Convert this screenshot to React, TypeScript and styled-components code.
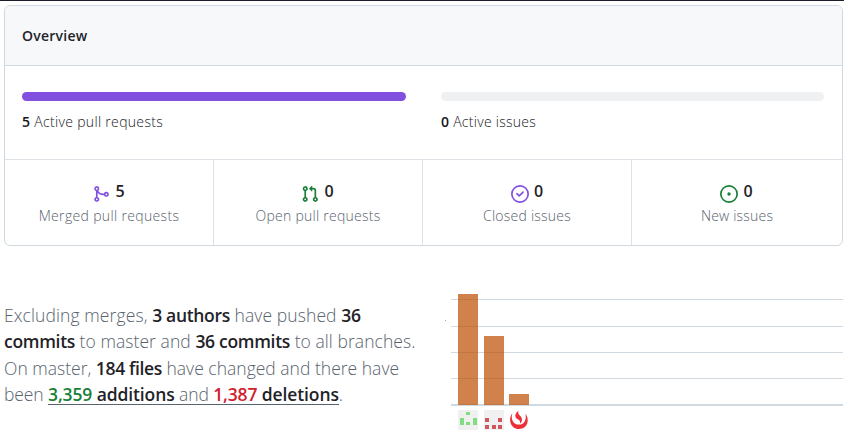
import React from "react";
import styled, { createGlobalStyle } from "styled-components";

const Global = createGlobalStyle`
  * { box-sizing: border-box; }
  body { margin: 0; background: #fff; overflow: hidden; }
`;

const Page = styled.main`
  width: 844px;
  height: 440px;
  border-top: 1px solid #1c1d29;
  padding: 4px 1px 0 4px;
  font-family: "Open Sans", "Noto Sans", sans-serif;
  font-weight: 400;
  color: #1f2328;
`;

const Card = styled.section`
  height: 241px;
  border: 1px solid #d1d9e0;
  border-radius: 6px;
  overflow: hidden;
`;

const CardHeader = styled.header`
  height: 60px;
  padding: 0 17px;
  background: #f6f8fa;
  border-bottom: 1px solid #d1d9e0;
`;

const Title = styled.h3<{ $spacing: number }>`
  margin: 0;
  font-size: 14px;
  line-height: 60px;
  font-weight: 600;
  letter-spacing: ${(p) => p.$spacing}px;
`;

const Meters = styled.div`
  height: 93px;
  padding: 26px 18px 0 17px;
  display: grid;
  grid-template-columns: 384px 383px;
  column-gap: 35px;
`;

const Track = styled.div<{ $color: string }>`
  height: 9px;
  border-radius: 5px;
  background: ${(p) => p.$color};
`;

const MeterLabel = styled.div<{ $spacing: number }>`
  width: max-content;
  margin-top: 11px;
  font-size: 14px;
  line-height: 20px;
  font-weight: 300;
  color: #15181c;
  letter-spacing: ${(p) => p.$spacing}px;
  b { font-weight: 600; }
`;

const Stats = styled.div`
  height: 86px;
  display: grid;
  grid-template-columns: 209px 209px 209px 1fr;
  border-top: 1px solid #dfe3e8;
`;

const Stat = styled.div`
  display: flex;
  flex-direction: column;
  align-items: center;
  padding-top: 20px;
  &:not(:last-child) { border-right: 1px solid #dfe3e8; }
`;

const StatTop = styled.div<{ $shift: number }>`
  display: flex;
  gap: 5px;
  height: 24px;
  margin-right: ${(p) => p.$shift}px;
  svg { margin-top: 5px; }
`;

const Count = styled.strong`
  font-size: 16px;
  line-height: 22px;
  font-weight: 600;
`;

const StatLabel = styled.div<{ $spacing: number }>`
  width: max-content;
  color: #59636e;
  font-size: 14px;
  line-height: 24px;
  font-weight: 300;
  letter-spacing: ${(p) => p.$spacing}px;
`;

const Lower = styled.div`
  display: flex;
  padding-top: 45px;
`;

const Summary = styled.div`
  width: 440px;
  padding-top: 11px;
  color: #59636e;
  font-size: 17.5px;
  line-height: 26.3px;
  font-weight: 300;
`;

const Line = styled.div<{ $spacing: number; $strong: number }>`
  width: max-content;
  white-space: pre;
  letter-spacing: ${(p) => p.$spacing}px;
  strong {
    color: #1f2328;
    font-weight: 600;
    letter-spacing: ${(p) => p.$strong}px;
  }
`;

const DiffLink = styled.span`
  display: inline-block;
  height: 24px;
  border-bottom: 1px solid #59636e;
`;

const Amount = styled.strong<{ $color: string }>`
  && { color: ${(p) => p.$color}; }
`;

const MergeIcon = () => (
  <svg width="18" height="18" viewBox="0 0 16 16" fill="#8250df">
    <path d="M5.45 5.154A4.25 4.25 0 0 0 9.25 7.5h1.378a2.251 2.251 0 1 1 0 1.5H9.25A5.734 5.734 0 0 1 5 7.123v3.505a2.25 2.25 0 1 1-1.5 0V5.372a2.25 2.25 0 1 1 1.95-.218ZM4.25 13.5a.75.75 0 1 0 0-1.5.75.75 0 0 0 0 1.5Zm8.5-4.5a.75.75 0 1 0 0-1.5.75.75 0 0 0 0 1.5ZM5 3.25a.75.75 0 1 0 0 .005V3.25Z" />
  </svg>
);

const PullIcon = () => (
  <svg width="18" height="18" viewBox="0 0 16 16" fill="#1a7f37">
    <path d="M1.5 3.25a2.25 2.25 0 1 1 3 2.122v5.256a2.251 2.251 0 1 1-1.5 0V5.372A2.25 2.25 0 0 1 1.5 3.25Zm5.677-.177L9.573.677A.25.25 0 0 1 10 .854V2.5h1A2.5 2.5 0 0 1 13.5 5v5.628a2.251 2.251 0 1 1-1.5 0V5a1 1 0 0 0-1-1h-1v1.646a.25.25 0 0 1-.427.177L7.177 3.427a.25.25 0 0 1 0-.354ZM3.75 2.5a.75.75 0 1 0 0 1.5.75.75 0 0 0 0-1.5Zm0 9.5a.75.75 0 1 0 0 1.5.75.75 0 0 0 0-1.5Zm8.25.75a.75.75 0 1 0 1.5 0 .75.75 0 0 0-1.5 0Z" />
  </svg>
);

const ClosedIcon = () => (
  <svg width="18" height="18" viewBox="0 0 16 16" fill="#8250df">
    <path d="M11.28 6.78a.75.75 0 0 0-1.06-1.06L7.25 8.69 5.78 7.22a.75.75 0 0 0-1.06 1.06l2 2a.75.75 0 0 0 1.06 0l3.5-3.5Z" />
    <path d="M16 8A8 8 0 1 1 0 8a8 8 0 0 1 16 0Zm-1.5 0a6.5 6.5 0 1 0-13 0 6.5 6.5 0 0 0 13 0Z" />
  </svg>
);

const OpenIcon = () => (
  <svg width="18" height="18" viewBox="0 0 16 16" fill="#1a7f37">
    <path d="M8 9.5a1.5 1.5 0 1 0 0-3 1.5 1.5 0 0 0 0 3Z" />
    <path d="M8 0a8 8 0 1 1 0 16A8 8 0 0 1 8 0ZM1.5 8a6.5 6.5 0 1 0 13 0 6.5 6.5 0 0 0-13 0Z" />
  </svg>
);

const stats = [
  { icon: <MergeIcon />, count: 5, label: "Merged pull requests", spacing: 0.34, shift: 1 },
  { icon: <PullIcon />, count: 0, label: "Open pull requests", spacing: 0.25, shift: 1 },
  { icon: <ClosedIcon />, count: 0, label: "Closed issues", spacing: 0.24, shift: 0 },
  { icon: <OpenIcon />, count: 0, label: "New issues", spacing: 0.2, shift: 1 },
];

const gridLines = [8, 35, 61, 87];
const bars = [
  { x: 14, top: 3 },
  { x: 40, top: 45 },
  { x: 65, top: 103 },
];
const greenCells = [[8, 2, 4, 3], [2, 8, 4, 7], [15, 8, 4, 7], [8, 12, 4, 3]];
const redCells = [[1, 8, 4, 4], [14, 8, 4, 4], [1, 15, 4, 4], [8, 15, 4, 4], [14, 15, 4, 4]];

const CommitChart = () => (
  <svg width="399" height="145" viewBox="0 0 399 145" shapeRendering="crispEdges">
    <rect x="1" y="29" width="1" height="1" fill="#a0a4a8" />
    {gridLines.map((y) => (
      <rect key={y} x="7" y={y} width="392" height="1" fill="#d1d9e0" />
    ))}
    <rect x="7" y="113" width="392" height="2" fill="#d1d9e0" />
    {bars.map((b) => (
      <rect key={b.x} x={b.x} y={b.top} width="20" height={114 - b.top} fill="#bc4c00" fillOpacity="0.7" />
    ))}
    <g transform="translate(14 119)">
      <rect width="20" height="20" fill="#f0f0f0" />
      {greenCells.map(([x, y, w, h]) => (
        <rect key={`${x}-${y}`} x={x} y={y} width={w} height={h} fill="#82dc82" />
      ))}
    </g>
    <g transform="translate(40 119)">
      <rect width="20" height="20" fill="#f0f0f0" />
      {redCells.map(([x, y, w, h]) => (
        <rect key={`${x}-${y}`} x={x} y={y} width={w} height={h} fill="#cf5660" />
      ))}
    </g>
    <g transform="translate(65 119)" fill="#ec3038" shapeRendering="auto">
      <path d="M3.2 3.4C-.8 8.2.8 18.7 10 19.1c9.2-.4 10.9-10.5 6.3-15.7 1.6 5.2-.6 11.2-6.3 11.2S1.6 9.2 3.2 3.4Z" />
      <path d="M9.4.8C5.1 4.3 5.7 7.9 9.1 9.5c2.2 1 2.3 2.6 1.8 4.3 3.1-2.7 2.5-6.2.1-8.1C9.1 4.3 8.9 2.6 9.4.8Z" />
    </g>
  </svg>
);

export default function App() {
  return (
    <Page>
      <Global />
      <Card>
        <CardHeader>
          <Title $spacing={0.25}>Overview</Title>
        </CardHeader>
        <Meters>
          <div>
            <Track $color="#8250df" />
            <MeterLabel $spacing={0.32}><b>5</b> Active pull requests</MeterLabel>
          </div>
          <div>
            <Track $color="#eff0f2" />
            <MeterLabel $spacing={0.27}><b>0</b> Active issues</MeterLabel>
          </div>
        </Meters>
        <Stats>
          {stats.map((s) => (
            <Stat key={s.label}>
              <StatTop $shift={s.shift}>{s.icon}<Count>{s.count}</Count></StatTop>
              <StatLabel $spacing={s.spacing}>{s.label}</StatLabel>
            </Stat>
          ))}
        </Stats>
      </Card>
      <Lower>
        <Summary>
          <Line $spacing={0.1} $strong={-0.33}>Excluding merges, <strong>3 authors</strong> have pushed <strong>36</strong></Line>
          <Line $spacing={0.06} $strong={-0.3}><strong>commits</strong> to master and <strong>36 commits</strong> to all branches.</Line>
          <Line $spacing={0.01} $strong={-0.35}>On master, <strong>184 files</strong> have changed and there have</Line>
          <Line $spacing={-0.1} $strong={-0.12}>been <DiffLink><Amount $color="#1a7f37">3,359</Amount> <strong>additions</strong> and <Amount $color="#cf222e">1,387</Amount> <strong>deletions</strong></DiffLink>.</Line>
        </Summary>
        <CommitChart />
      </Lower>
    </Page>
  );
}
